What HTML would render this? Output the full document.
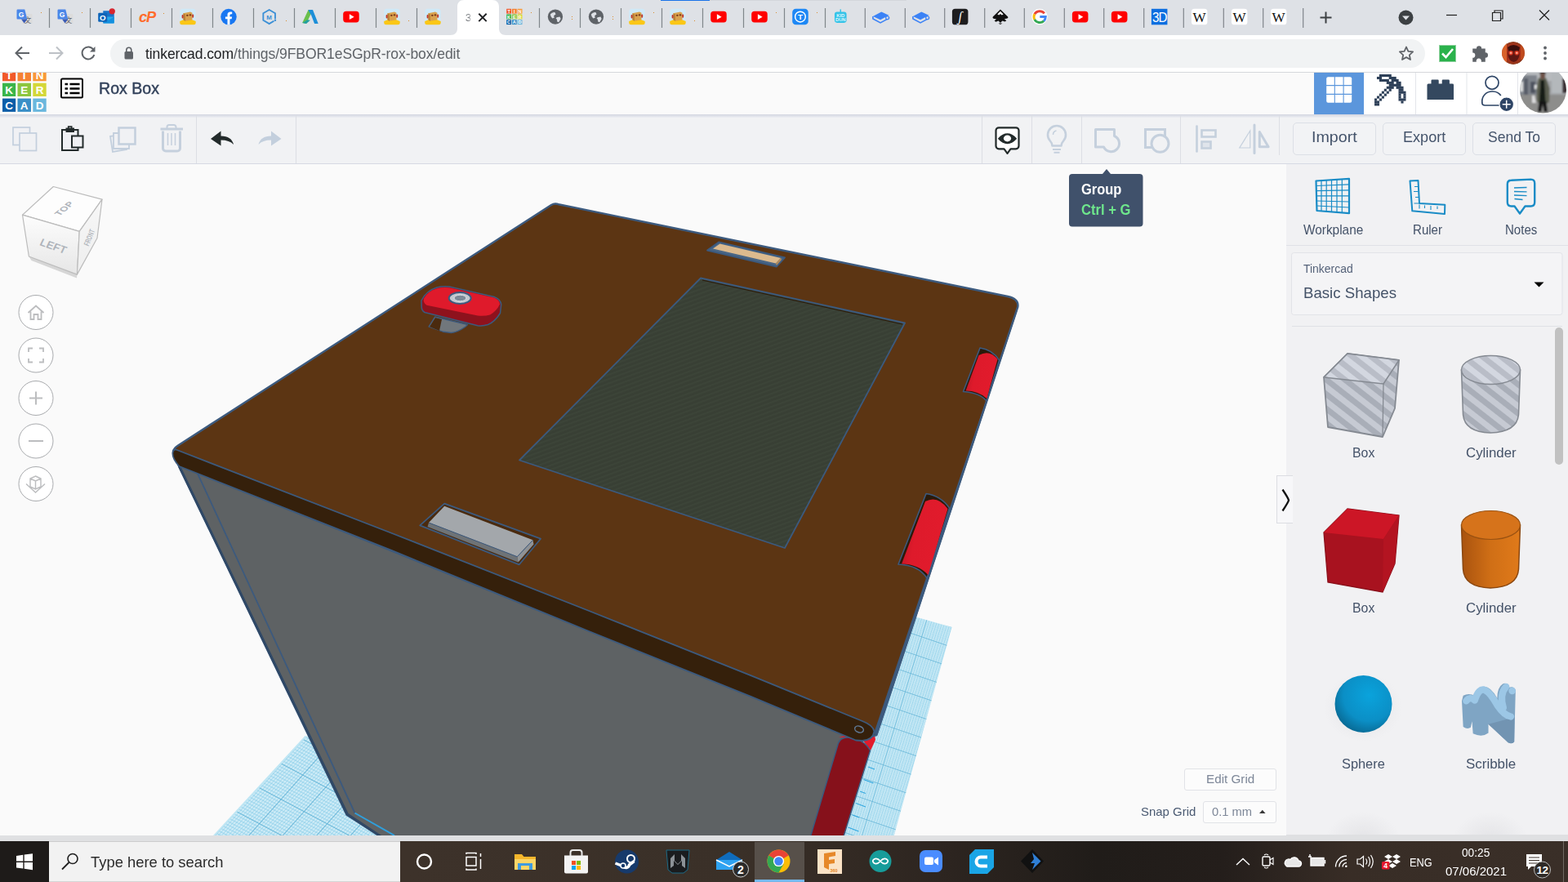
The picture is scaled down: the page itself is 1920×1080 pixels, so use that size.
<!DOCTYPE html>
<html lang="en">
<head>
<meta charset="utf-8">
<title>Rox Box - Tinkercad</title>
<style>
*{box-sizing:border-box;margin:0;padding:0}
html,body{width:1920px;height:1080px;overflow:hidden;background:#fafafa;font-family:"Liberation Sans",sans-serif;}
#root{position:relative;width:1920px;height:1080px;overflow:hidden;background:#fafafa}
.abs{position:absolute}
svg{position:absolute;overflow:visible}
/* chrome */
#tabstrip{left:0;top:0;width:1920px;height:43px;background:#dee1e6}
#addr{left:0;top:43px;width:1920px;height:45px;background:#fff}
#addrline{left:0;top:88px;width:1920px;height:1px;background:#d5d7db}
#omni{left:135px;top:48px;width:1610px;height:35px;border-radius:17.5px;background:#f1f3f4}
#url{left:178px;top:55.200px;transform:scaleX(.955);transform-origin:0 0;font-size:18.4px;line-height:22px;color:#5f6368;white-space:nowrap;letter-spacing:-0.1px}
#url b{font-weight:normal;color:#202124}
.sep{position:absolute;top:10px;width:1px;height:24px;background:#868b92}
/* tinkercad header */
#tkhead{left:0;top:89px;width:1920px;height:51px;background:#fafafa}
#tkshadow{left:0;top:140px;width:1920px;height:4px;background:linear-gradient(#d3d6e0,#eceef2)}
#title{left:121px;top:97px;font-size:19.600px;line-height:24px;color:#33425b;white-space:nowrap;font-weight:normal;-webkit-text-stroke:0.5px #33425b}
#toolbar{left:0;top:141px;width:1920px;height:60px;background:#f1f2f4}
#toolline{left:0;top:200px;width:1920px;height:1px;background:#d6d9e3}
.tdiv{position:absolute;top:141px;width:1px;height:59px;background:#dcdee4}
.btn{position:absolute;top:150px;width:102px;height:40px;border:1px solid #dcdfe6;border-radius:5px;background:#f2f3f5;color:#3b4a5e;font-size:19px;line-height:33px;text-align:center;letter-spacing:0.4px}
/* viewport */
#view{left:0;top:201px;width:1575px;height:822px;background:#fafafa;overflow:hidden}
#panel{left:1575px;top:201px;width:345px;height:821px;background:#f1f1f3;overflow:hidden}
.plabel{position:absolute;font-size:16px;line-height:20px;color:#3d4b63;text-align:center;width:140px;letter-spacing:0.3px;white-space:nowrap}
.slabel{position:absolute;font-size:17px;line-height:20px;color:#3d4b63;text-align:center;width:140px;letter-spacing:0.3px;white-space:nowrap}
#hstrip{left:0;top:1023px;width:1920px;height:7px;background:#dfe0e2}
#taskbar{left:0;top:1030px;width:1920px;height:50px;background:linear-gradient(90deg,#3d322a 0,#3d322a 26%,#3a3028 47%,#2d2520 60%,#201c19 70%,#241e1b 78%,#382d26 86%,#3a2f28 100%)}
#search{left:60px;top:1030px;width:430px;height:50px;background:#f2f2f2;border-top:1px solid #cdcdcd;border-bottom:1px solid #d5d5d5}
#stext{left:110px;top:1043px;font-size:18.5px;line-height:24px;color:#2b2b2b;white-space:nowrap}
.t{position:absolute;white-space:nowrap;transform-origin:0 0;font-family:"Liberation Sans",sans-serif}
</style>
</head>
<body>
<div id="root">
<div class="abs" id="tabstrip"></div>
<div class="abs" id="addr"></div><div class="abs" id="addrline"></div>
<svg width="1920" height="89" viewBox="0 0 1920 89" style="left:0;top:0">
<rect x="809" y="0" width="60" height="1" fill="#1a73e8"/><rect x="869" y="0" width="241" height="1" fill="#d3d6db"/>
<path d="M551.500 43c5.500 0 8.500-3 8.500-8.500V8.500c0-5.500 3-8.500 8.500-8.500h34c5.500 0 8.500 3 8.500 8.500v26c0 5.500 3 8.500 8.500 8.500z" fill="#fff"/>
<text x="573.500" y="25.800" font-size="13.500" fill="#5f6368" text-anchor="middle" opacity=".8">3</text>
<rect x="575.500" y="10" width="4" height="22" fill="#fff" opacity=".75"/>
<path d="M586.300 16.700l9.400 9.400m0-9.400l-9.400 9.400" stroke="#202124" stroke-width="2" fill="none"/>
<rect x="59.9" y="10" width="1.200" height="24" fill="#80868b"/>
<rect x="109.9" y="10" width="1.200" height="24" fill="#80868b"/>
<rect x="159.9" y="10" width="1.200" height="24" fill="#80868b"/>
<rect x="209.9" y="10" width="1.200" height="24" fill="#80868b"/>
<rect x="259.9" y="10" width="1.200" height="24" fill="#80868b"/>
<rect x="309.9" y="10" width="1.200" height="24" fill="#80868b"/>
<rect x="359.9" y="10" width="1.200" height="24" fill="#80868b"/>
<rect x="409.9" y="10" width="1.200" height="24" fill="#80868b"/>
<rect x="459.9" y="10" width="1.200" height="24" fill="#80868b"/>
<rect x="509.9" y="10" width="1.200" height="24" fill="#80868b"/>
<rect x="659.9" y="10" width="1.200" height="24" fill="#80868b"/>
<rect x="709.9" y="10" width="1.200" height="24" fill="#80868b"/>
<rect x="759.9" y="10" width="1.200" height="24" fill="#80868b"/>
<rect x="809.9" y="10" width="1.200" height="24" fill="#80868b"/>
<rect x="859.9" y="10" width="1.200" height="24" fill="#80868b"/>
<rect x="909.9" y="10" width="1.200" height="24" fill="#80868b"/>
<rect x="959.9" y="10" width="1.200" height="24" fill="#80868b"/>
<rect x="1009.9" y="10" width="1.200" height="24" fill="#80868b"/>
<rect x="1058.7" y="10" width="1.200" height="24" fill="#80868b"/>
<rect x="1107.7" y="10" width="1.200" height="24" fill="#80868b"/>
<rect x="1156.1" y="10" width="1.200" height="24" fill="#80868b"/>
<rect x="1205.1" y="10" width="1.200" height="24" fill="#80868b"/>
<rect x="1253.7" y="10" width="1.200" height="24" fill="#80868b"/>
<rect x="1302.7" y="10" width="1.200" height="24" fill="#80868b"/>
<rect x="1351.1" y="10" width="1.200" height="24" fill="#80868b"/>
<rect x="1400.1" y="10" width="1.200" height="24" fill="#80868b"/>
<rect x="1448.7" y="10" width="1.200" height="24" fill="#80868b"/>
<rect x="1497.7" y="10" width="1.200" height="24" fill="#80868b"/>
<rect x="1546.1" y="10" width="1.200" height="24" fill="#80868b"/>
<rect x="1595.1" y="10" width="1.200" height="24" fill="#80868b"/>
<g transform="translate(19.9 10.800) scale(1.220)"><rect x="6" y="5" width="10" height="10" rx="1" fill="#dcdcdc"/><text x="11.5" y="14" font-size="7" fill="#5f6368" text-anchor="middle" font-family="Noto Sans CJK SC,sans-serif">文</text><path d="M0.5 1.5a1 1 0 0 1 1-1h7l2.5 10h-9.5a1 1 0 0 1-1-1z" fill="#4a86e8"/><path d="M5 10.5h6l-3 4z" fill="#3b5bb5"/><text x="5" y="8" font-size="7" font-weight="bold" fill="#fff" text-anchor="middle">G</text></g>
<g transform="translate(69.9 10.800) scale(1.220)"><rect x="6" y="5" width="10" height="10" rx="1" fill="#dcdcdc"/><text x="11.5" y="14" font-size="7" fill="#5f6368" text-anchor="middle" font-family="Noto Sans CJK SC,sans-serif">文</text><path d="M0.5 1.5a1 1 0 0 1 1-1h7l2.5 10h-9.5a1 1 0 0 1-1-1z" fill="#4a86e8"/><path d="M5 10.5h6l-3 4z" fill="#3b5bb5"/><text x="5" y="8" font-size="7" font-weight="bold" fill="#fff" text-anchor="middle">G</text></g>
<g transform="translate(120.2 10.800) scale(1.220)"><rect x="5" y="2" width="11" height="8" fill="#1a73c8"/><path d="M5 8l11 0v5.5a1 1 0 0 1-1 1h-9a1 1 0 0 1-1-1z" fill="#28a8ea"/><path d="M5 8l5.5 3.5L16 8v6.5H5z" fill="#1490df"/><rect x="0" y="4" width="9" height="9" rx="1" fill="#0f64b8"/><text x="4.5" y="11.4" font-size="8" font-weight="bold" fill="#fff" text-anchor="middle">O</text><circle cx="14" cy="2.5" r="3" fill="#d7262f"/></g>
<g transform="translate(170.2 10.800) scale(1.220)"><text x="8" y="13.5" font-size="15" font-weight="bold" font-style="italic" fill="#ff6c2c" text-anchor="middle" letter-spacing="-1">cP</text></g>
<g transform="translate(220.2 10.800) scale(1.220)"><rect x="0" y="0" width="16" height="16" rx="3" fill="#cfe9f7"/><path d="M0 12.5q8-4 16 0v1.5a2 2 0 0 1-2 2h-12a2 2 0 0 1-2-2z" fill="#fbc716"/><path d="M3.5 4.5l7-1.5 2 1v7l-7 1.3-2-1.3z" fill="#d9a24e"/><path d="M3.5 4.5l2 1v6.8l-2-1.3z" fill="#b98035"/><rect x="2" y="6" width="1.6" height="3.5" rx=".8" fill="#c0392b"/><rect x="12.3" y="5.5" width="1.6" height="3.5" rx=".8" fill="#c0392b"/><circle cx="7.5" cy="6.6" r="1" fill="#7a3b1d"/><circle cx="10.5" cy="6.2" r="1" fill="#7a3b1d"/></g>
<g transform="translate(270.2 10.800) scale(1.220)"><circle cx="8" cy="8" r="8" fill="#1877f2"/><path d="M11 10.3l.4-2.3H9.2V6.6c0-.7.3-1.3 1.3-1.3h1V3.2S10.600 3 9.700 3C7.900 3 6.800 4.100 6.800 6v2H4.700v2.300h2.100V16h2.400v-5.700z" fill="#fff"/></g>
<g transform="translate(319.9 10.800) scale(1.220)"><path d="M8 1l6 3.5v7L8 15 2 11.500v-7z" fill="none" stroke="#3a8fd6" stroke-width="1.5"/><text x="8" y="10.600" font-size="6.5" font-weight="bold" fill="#3a8fd6" text-anchor="middle">M</text><circle cx="14" cy="11.500" r="1.600" fill="#dee1e6"/><circle cx="14" cy="11.500" r="1" fill="#3a8fd6"/></g>
<g transform="translate(370.2 10.800) scale(1.220)"><path d="M0 14L6 1h4.500L4 15z" fill="#6abf4b"/><path d="M0 14l4 1 4-3.500-3-0.500z" fill="#22a0a0"/><path d="M6 1h4.500L16 15h-3.800L9 6.500 7.200 3.600z" fill="#1d8fd8"/></g>
<g transform="translate(420.2 10.800) scale(1.220)"><rect x="0" y="2.500" width="16" height="11.200" rx="3" fill="#ff0000"/><path d="M6.300 5.300v5.600L11 8.100z" fill="#fff"/></g>
<g transform="translate(470.2 10.800) scale(1.220)"><rect x="0" y="0" width="16" height="16" rx="3" fill="#cfe9f7"/><path d="M0 12.5q8-4 16 0v1.5a2 2 0 0 1-2 2h-12a2 2 0 0 1-2-2z" fill="#fbc716"/><path d="M3.5 4.5l7-1.5 2 1v7l-7 1.3-2-1.3z" fill="#d9a24e"/><path d="M3.5 4.5l2 1v6.8l-2-1.3z" fill="#b98035"/><rect x="2" y="6" width="1.6" height="3.5" rx=".8" fill="#c0392b"/><rect x="12.3" y="5.5" width="1.6" height="3.5" rx=".8" fill="#c0392b"/><circle cx="7.5" cy="6.6" r="1" fill="#7a3b1d"/><circle cx="10.5" cy="6.2" r="1" fill="#7a3b1d"/></g>
<g transform="translate(520.2 10.800) scale(1.220)"><rect x="0" y="0" width="16" height="16" rx="3" fill="#cfe9f7"/><path d="M0 12.5q8-4 16 0v1.5a2 2 0 0 1-2 2h-12a2 2 0 0 1-2-2z" fill="#fbc716"/><path d="M3.5 4.5l7-1.5 2 1v7l-7 1.3-2-1.3z" fill="#d9a24e"/><path d="M3.5 4.5l2 1v6.8l-2-1.3z" fill="#b98035"/><rect x="2" y="6" width="1.6" height="3.5" rx=".8" fill="#c0392b"/><rect x="12.3" y="5.5" width="1.6" height="3.5" rx=".8" fill="#c0392b"/><circle cx="7.5" cy="6.6" r="1" fill="#7a3b1d"/><circle cx="10.5" cy="6.2" r="1" fill="#7a3b1d"/></g>
<g transform="translate(620.2 10.800) scale(1.220)"><rect x="0.0" y="0.0" width="4.800" height="4.800" fill="#f1592a"/><text x="2.4" y="4.1" font-size="4.600" font-weight="bold" fill="#fff" text-anchor="middle">T</text><rect x="5.5" y="0.0" width="4.800" height="4.800" fill="#f58233"/><text x="7.9" y="4.1" font-size="4.600" font-weight="bold" fill="#fff" text-anchor="middle">I</text><rect x="11.0" y="0.0" width="4.800" height="4.800" fill="#f89939"/><text x="13.4" y="4.1" font-size="4.600" font-weight="bold" fill="#fff" text-anchor="middle">N</text><rect x="0.0" y="5.5" width="4.800" height="4.800" fill="#3ab54a"/><text x="2.4" y="9.6" font-size="4.600" font-weight="bold" fill="#fff" text-anchor="middle">K</text><rect x="5.5" y="5.5" width="4.800" height="4.800" fill="#8cc63f"/><text x="7.9" y="9.6" font-size="4.600" font-weight="bold" fill="#fff" text-anchor="middle">E</text><rect x="11.0" y="5.5" width="4.800" height="4.800" fill="#d7d935"/><text x="13.4" y="9.6" font-size="4.600" font-weight="bold" fill="#fff" text-anchor="middle">R</text><rect x="0.0" y="11.0" width="4.800" height="4.800" fill="#0b5ea8"/><text x="2.4" y="15.1" font-size="4.600" font-weight="bold" fill="#fff" text-anchor="middle">C</text><rect x="5.5" y="11.0" width="4.800" height="4.800" fill="#3a8fc7"/><text x="7.9" y="15.1" font-size="4.600" font-weight="bold" fill="#fff" text-anchor="middle">A</text><rect x="11.0" y="11.0" width="4.800" height="4.800" fill="#6ab7dd"/><text x="13.4" y="15.1" font-size="4.600" font-weight="bold" fill="#fff" text-anchor="middle">D</text></g>
<g transform="translate(670.2 10.800) scale(1.220)"><circle cx="8" cy="8" r="7.500" fill="#5f6368"/><path d="M3 5.500q2-2.500 4.500-2l1 2-2 1.500 .5 2-2 .5-1.500-2zM9.500 8.500l3-.5 1 2-2 3.500-1.500-.5-.5-2.500-1-1z" fill="#dee1e6"/></g>
<g transform="translate(720.2 10.800) scale(1.220)"><circle cx="8" cy="8" r="7.500" fill="#5f6368"/><path d="M3 5.500q2-2.500 4.500-2l1 2-2 1.500 .5 2-2 .5-1.500-2zM9.500 8.500l3-.5 1 2-2 3.500-1.500-.5-.5-2.500-1-1z" fill="#dee1e6"/></g>
<g transform="translate(770.2 10.800) scale(1.220)"><rect x="0" y="0" width="16" height="16" rx="3" fill="#cfe9f7"/><path d="M0 12.5q8-4 16 0v1.5a2 2 0 0 1-2 2h-12a2 2 0 0 1-2-2z" fill="#fbc716"/><path d="M3.5 4.5l7-1.5 2 1v7l-7 1.3-2-1.3z" fill="#d9a24e"/><path d="M3.5 4.5l2 1v6.8l-2-1.3z" fill="#b98035"/><rect x="2" y="6" width="1.6" height="3.5" rx=".8" fill="#c0392b"/><rect x="12.3" y="5.5" width="1.6" height="3.5" rx=".8" fill="#c0392b"/><circle cx="7.5" cy="6.6" r="1" fill="#7a3b1d"/><circle cx="10.5" cy="6.2" r="1" fill="#7a3b1d"/></g>
<g transform="translate(820.2 10.800) scale(1.220)"><rect x="0" y="0" width="16" height="16" rx="3" fill="#cfe9f7"/><path d="M0 12.5q8-4 16 0v1.5a2 2 0 0 1-2 2h-12a2 2 0 0 1-2-2z" fill="#fbc716"/><path d="M3.5 4.5l7-1.5 2 1v7l-7 1.3-2-1.3z" fill="#d9a24e"/><path d="M3.5 4.5l2 1v6.8l-2-1.3z" fill="#b98035"/><rect x="2" y="6" width="1.6" height="3.5" rx=".8" fill="#c0392b"/><rect x="12.3" y="5.5" width="1.6" height="3.5" rx=".8" fill="#c0392b"/><circle cx="7.5" cy="6.6" r="1" fill="#7a3b1d"/><circle cx="10.5" cy="6.2" r="1" fill="#7a3b1d"/></g>
<g transform="translate(870.2 10.800) scale(1.220)"><rect x="0" y="2.500" width="16" height="11.200" rx="3" fill="#ff0000"/><path d="M6.300 5.300v5.600L11 8.100z" fill="#fff"/></g>
<g transform="translate(920.2 10.800) scale(1.220)"><rect x="0" y="2.500" width="16" height="11.200" rx="3" fill="#ff0000"/><path d="M6.300 5.300v5.600L11 8.100z" fill="#fff"/></g>
<g transform="translate(970.2 10.800) scale(1.220)"><rect x="0" y="0" width="16" height="16" rx="3.500" fill="#1e88f5"/><circle cx="8" cy="8" r="5.200" fill="none" stroke="#fff" stroke-width="1.200"/><text x="8" y="11" font-size="8" font-weight="bold" fill="#fff" text-anchor="middle">T</text></g>
<g transform="translate(1019.5 10.800) scale(1.220)"><rect x="2" y="3" width="12" height="11" rx="2.500" fill="#35c3e8"/><rect x="7.400" y="0.500" width="1.200" height="3" fill="#35c3e8"/><text x="8" y="8.300" font-size="4.800" font-weight="bold" fill="#dff6fd" text-anchor="middle">KID</text><text x="8" y="12.800" font-size="4.800" font-weight="bold" fill="#dff6fd" text-anchor="middle">DUN</text></g>
<g transform="translate(1068.9 10.800) scale(1.220)"><path d="M0 7.500L8.500 3 16 6.500 7.500 11z" fill="#3b82f6"/><path d="M0 7.500v2.500L7.500 14 16 9.500v-1" fill="none" stroke="#3b82f6" stroke-width="1.300"/><circle cx="14.500" cy="9" r="1.600" fill="#dee1e6" stroke="#3b82f6" stroke-width="1"/></g>
<g transform="translate(1117.9 10.800) scale(1.220)"><path d="M0 7.500L8.500 3 16 6.500 7.500 11z" fill="#3b82f6"/><path d="M0 7.500v2.500L7.500 14 16 9.500v-1" fill="none" stroke="#3b82f6" stroke-width="1.300"/><circle cx="14.500" cy="9" r="1.600" fill="#dee1e6" stroke="#3b82f6" stroke-width="1"/></g>
<g transform="translate(1165.9 10.800) scale(1.220)"><rect x="0" y="0" width="16" height="16" rx="3" fill="#1d1d1f"/><text x="8" y="12.500" font-size="13" font-style="italic" fill="#fff" text-anchor="middle" font-family="Liberation Serif,serif">ʃ</text></g>
<g transform="translate(1215.2 10.800) scale(1.220)"><path d="M8 0.500L15.500 8q.8 1-.5 1.500l-3 .8 2 1.500-1.500 1-2.500-.8L8 14l-2-2-2.500 1-1.500-1 2-1.500-3-.8Q-.3 9 .5 8z" fill="#111"/><path d="M8 2.500l3 3-1.500.8L8 5 6.500 6.300 5 5.500z" fill="#fff"/><path d="M6 14.500l2 1.200 2-1.200z" fill="#111"/></g>
<g transform="translate(1263.2 10.800) scale(1.220)"><circle cx="8" cy="8" r="8" fill="#fff"/><path d="M12.800 4.600A6 6 0 0 0 3 5.300" fill="none" stroke="#ea4335" stroke-width="2.400"/><path d="M3 5.300a6 6 0 0 0 0 5.400" fill="none" stroke="#fbbc05" stroke-width="2.400"/><path d="M3 10.700a6 6 0 0 0 9.300 1.500" fill="none" stroke="#34a853" stroke-width="2.400"/><path d="M12.300 12.200A6 6 0 0 0 14 8H8.300" fill="none" stroke="#4285f4" stroke-width="2.400"/></g>
<g transform="translate(1312.9 10.800) scale(1.220)"><rect x="0" y="2.500" width="16" height="11.200" rx="3" fill="#ff0000"/><path d="M6.300 5.300v5.600L11 8.100z" fill="#fff"/></g>
<g transform="translate(1360.9 10.800) scale(1.220)"><rect x="0" y="2.500" width="16" height="11.200" rx="3" fill="#ff0000"/><path d="M6.300 5.300v5.600L11 8.100z" fill="#fff"/></g>
<g transform="translate(1409.9 10.800) scale(1.220)"><rect x="0" y="0" width="16" height="16" fill="#0d6fe0"/><text x="8" y="13" font-size="13" fill="#fff" text-anchor="middle" letter-spacing="-1" textLength="14" lengthAdjust="spacingAndGlyphs">3D</text></g>
<g transform="translate(1458.9 10.800) scale(1.220)"><rect x="0" y="0" width="16" height="16" rx="3" fill="#fff"/><text x="8" y="13" font-size="14" fill="#111" text-anchor="middle" font-family="Liberation Serif,serif">W</text></g>
<g transform="translate(1507.9 10.800) scale(1.220)"><rect x="0" y="0" width="16" height="16" rx="3" fill="#fff"/><text x="8" y="13" font-size="14" fill="#111" text-anchor="middle" font-family="Liberation Serif,serif">W</text></g>
<g transform="translate(1555.9 10.800) scale(1.220)"><rect x="0" y="0" width="16" height="16" rx="3" fill="#fff"/><text x="8" y="13" font-size="14" fill="#111" text-anchor="middle" font-family="Liberation Serif,serif">W</text></g>
<rect x="50" y="15" width="1" height="1" fill="#d98b2b"/>
<rect x="100" y="15" width="1" height="1" fill="#d98b2b"/>
<rect x="200" y="16" width="1" height="1" fill="#d98b2b"/>
<rect x="350" y="25" width="1" height="1" fill="#d98b2b"/>
<rect x="500" y="25" width="1" height="1" fill="#d98b2b"/>
<rect x="650" y="15" width="1" height="1" fill="#d98b2b"/>
<rect x="700" y="20" width="1" height="1" fill="#d98b2b"/>
<rect x="700" y="23" width="1" height="1" fill="#d98b2b"/>
<rect x="750" y="20" width="1" height="1" fill="#d98b2b"/>
<rect x="750" y="23" width="1" height="1" fill="#d98b2b"/>
<rect x="800" y="15" width="1" height="1" fill="#d98b2b"/>
<rect x="850" y="25" width="1" height="1" fill="#d98b2b"/>
<rect x="950" y="15" width="1" height="1" fill="#d98b2b"/>
<rect x="1000" y="15" width="1" height="1" fill="#d98b2b"/>
<path d="M1616.500 21.500h14m-7-7v14" stroke="#3c4043" stroke-width="2" fill="none"/>
<circle cx="1721.500" cy="21.500" r="9" fill="#3c4043"/><path d="M1717 19.500h9l-4.500 5z" fill="#dee1e6"/>
<path d="M1771 18.500h13" stroke="#1f1f1f" stroke-width="1.200"/>
<path d="M1827.500 15.500h10v10h-10z" fill="none" stroke="#1f1f1f" stroke-width="1.200"/><path d="M1830 15.500v-2.500h10v10h-2.500" fill="none" stroke="#1f1f1f" stroke-width="1.200"/>
<path d="M1885 12.500l12 12m0-12l-12 12" stroke="#1f1f1f" stroke-width="1.200" fill="none"/>
<path d="M36 65H20m7-7.500L19.500 65l7.500 7.500" stroke="#5f6368" stroke-width="2" fill="none"/>
<path d="M60 65h16m-7-7.500L76.500 65 69 72.500" stroke="#bdc1c6" stroke-width="2" fill="none"/>
<path d="M114.500 61a7.500 7.500 0 1 0 .8 6" stroke="#5f6368" stroke-width="2" fill="none"/><path d="M116.500 57v6.500h-6.500z" fill="#5f6368"/>
</svg>
<div class="abs" id="omni"></div>
<svg width="1920" height="89" viewBox="0 0 1920 89" style="left:0;top:0">
<rect x="152.500" y="63" width="10.500" height="9.500" rx="1.500" fill="#5f6368"/><path d="M154.800 63.500v-2.200a3 3 0 0 1 6 0v2.200" stroke="#5f6368" stroke-width="1.600" fill="none"/>
<path d="M1722 57.500l2.400 5.300 5.700.6-4.300 3.900 1.200 5.700-5-2.900-5 2.900 1.200-5.700-4.300-3.900 5.700-.6z" fill="none" stroke="#5f6368" stroke-width="1.800" stroke-linejoin="round"/>
<rect x="1762.500" y="55.500" width="20" height="20" fill="#2bb24c" stroke="#8fd19e" stroke-width="1"/><path d="M1766 65.500l4.500 4.500 8.500-10" stroke="#fff" stroke-width="2.600" fill="none"/>
<g transform="translate(1812 65.500) scale(1.350) translate(-1811.500 -66.500)"><path d="M1805 62h3.500a2.300 2.300 0 1 1 4.600 0h3.400v3.600a2.400 2.400 0 1 1 0 4.800V74h-3.700a2.300 2.300 0 1 0-4.400 0H1805v-3.600a2.300 2.300 0 1 0 0-4.600z" fill="#5f6368"/></g>
<defs><radialGradient id="av1" cx=".5" cy=".5" r=".5"><stop offset="0" stop-color="#8a2418"/><stop offset=".7" stop-color="#a8301a"/><stop offset="1" stop-color="#8c3a1c"/></radialGradient><radialGradient id="av2" cx=".5" cy=".5" r=".5"><stop offset="0" stop-color="#fff0ea"/><stop offset=".35" stop-color="#ff5a3c"/><stop offset="1" stop-color="#ff2a12" stop-opacity="0"/></radialGradient><clipPath id="avc1"><circle cx="1853" cy="65" r="14"/></clipPath></defs>
<g clip-path="url(#avc1)"><circle cx="1853" cy="65" r="14" fill="url(#av1)"/><rect x="1839" y="51" width="6" height="28" fill="#d8612a"/><rect x="1862" y="53" width="5" height="20" fill="#c8501f" opacity=".8"/><ellipse cx="1853.500" cy="66" rx="7" ry="10" fill="#5e1712"/><path d="M1846 58q7-6 15 0l-1 4h-13z" fill="#3a0f0d"/><circle cx="1850" cy="64.800" r="3.600" fill="url(#av2)"/><circle cx="1857.300" cy="64.800" r="3.600" fill="url(#av2)"/></g>
<circle cx="1892" cy="58.500" r="1.900" fill="#5f6368"/><circle cx="1892" cy="65" r="1.900" fill="#5f6368"/><circle cx="1892" cy="71.500" r="1.900" fill="#5f6368"/>
</svg>
<div class="abs" id="url"><b>tinkercad.com</b>/things/9FBOR1eSGpR-rox-box/edit</div>
<!-- Tinkercad header -->
<div class="abs" id="tkhead"></div>
<div class="abs" id="toolbar"></div>
<div class="abs" id="tkshadow"></div>
<div class="abs" id="toolline"></div>
<svg width="1920" height="52" viewBox="0 89 1920 52" style="left:0;top:89px;overflow:hidden">
  <g font-family="Liberation Sans,sans-serif" font-weight="bold" font-size="13.500" fill="#fff" text-anchor="middle">
    <rect x="3" y="83" width="16.200" height="16.300" fill="#f1592a"/><text x="11.100" y="96.700">T</text>
    <rect x="21.500" y="83" width="16.500" height="16.300" fill="#f58233"/><text x="29.700" y="96.700">I</text>
    <rect x="40.300" y="83" width="16.400" height="16.300" fill="#f89939"/><text x="48.500" y="96.700">N</text>
    <rect x="3" y="101.700" width="16.200" height="16.300" fill="#3ab54a"/><text x="11.100" y="115">K</text>
    <rect x="21.500" y="101.700" width="16.500" height="16.300" fill="#8cc63f"/><text x="29.700" y="115">E</text>
    <rect x="40.300" y="101.700" width="16.400" height="16.300" fill="#d4d738"/><text x="48.500" y="115">R</text>
    <rect x="3" y="120.600" width="16.200" height="16.300" fill="#0b5ea8"/><text x="11.100" y="133.500">C</text>
    <rect x="21.500" y="120.600" width="16.500" height="16.300" fill="#3a8fc7"/><text x="29.700" y="133.500">A</text>
    <rect x="40.300" y="120.600" width="16.400" height="16.300" fill="#6ab7dd"/><text x="48.500" y="133.500">D</text>
  </g>
  <!-- list icon -->
  <rect x="75" y="96.500" width="26" height="23" rx="1.500" fill="#fff" stroke="#000" stroke-width="2"/>
  <path d="M79.500 103h3.500m2.500 0h12M79.500 108.500h3.500m2.500 0h12M79.500 114h3.500m2.500 0h12" stroke="#000" stroke-width="2.400"/>
  <!-- right buttons -->
  <rect x="1609" y="89" width="61" height="51" fill="#5b96dc"/>
  <rect x="1624.200" y="94.200" width="31" height="31.600" rx="2" fill="#fff"/>
  <path d="M1634.300 94v32M1645.100 94v32M1624 104.600h32M1624 115.400h32" stroke="#5b96dc" stroke-width="1.100" fill="none"/>
  <rect x="1670" y="89" width="250" height="51" fill="#fff"/>
  <rect x="1733" y="89" width="1" height="51" fill="#e3e5ea"/><rect x="1795.500" y="89" width="1" height="51" fill="#e3e5ea"/><rect x="1858" y="89" width="1" height="51" fill="#e3e5ea"/>
  <!-- pickaxe -->
  <g fill="#2e4058"><rect x="1688.90" y="91.00" width="14.90" height="3.10"/><rect x="1685.95" y="93.95" width="6.05" height="3.10"/><rect x="1700.70" y="93.95" width="9.00" height="3.10"/><rect x="1688.90" y="96.90" width="11.95" height="3.10"/><rect x="1703.65" y="96.90" width="9.00" height="3.10"/><rect x="1697.75" y="99.85" width="9.00" height="3.10"/><rect x="1709.55" y="99.85" width="6.05" height="3.10"/><rect x="1700.70" y="102.80" width="14.90" height="3.10"/><rect x="1697.75" y="105.75" width="9.00" height="3.10"/><rect x="1709.55" y="105.75" width="9.00" height="3.10"/><rect x="1694.80" y="108.70" width="3.10" height="3.10"/><rect x="1700.70" y="108.70" width="3.10" height="3.10"/><rect x="1712.50" y="108.70" width="6.05" height="3.10"/><rect x="1691.85" y="111.65" width="3.10" height="3.10"/><rect x="1697.75" y="111.65" width="3.10" height="3.10"/><rect x="1712.50" y="111.65" width="9.00" height="3.10"/><rect x="1688.90" y="114.60" width="3.10" height="3.10"/><rect x="1694.80" y="114.60" width="3.10" height="3.10"/><rect x="1712.50" y="114.60" width="3.10" height="3.10"/><rect x="1718.40" y="114.60" width="3.10" height="3.10"/><rect x="1685.95" y="117.55" width="3.10" height="3.10"/><rect x="1691.85" y="117.55" width="3.10" height="3.10"/><rect x="1712.50" y="117.55" width="3.10" height="3.10"/><rect x="1718.40" y="117.55" width="3.10" height="3.10"/><rect x="1683.00" y="120.50" width="3.10" height="3.10"/><rect x="1688.90" y="120.50" width="3.10" height="3.10"/><rect x="1712.50" y="120.50" width="9.00" height="3.10"/><rect x="1683.00" y="123.45" width="6.05" height="3.10"/><rect x="1715.45" y="123.45" width="3.10" height="3.10"/><rect x="1683.00" y="126.40" width="6.05" height="3.10"/></g>
  <!-- lego -->
  <path d="M1747.500 122v-18a1.500 1.500 0 0 1 1.500-1.500h3.500v-3.800a1.200 1.200 0 0 1 1.200-1.200h6.800a1.200 1.200 0 0 1 1.200 1.200v3.800h4v-3.800a1.200 1.200 0 0 1 1.200-1.200h6.800a1.200 1.200 0 0 1 1.200 1.200v3.800h3.600a1.500 1.500 0 0 1 1.500 1.500V122z" fill="#34485f"/>
  <!-- person plus -->
  <circle cx="1827" cy="101.300" r="8" fill="none" stroke="#2e4566" stroke-width="1.700"/>
  <path d="M1814.800 126v-2a12 12 0 0 1 12-12h1.500a12 12 0 0 1 9.500 5" fill="none" stroke="#2e4566" stroke-width="1.700"/>
  <path d="M1814.800 125.500q0 3.500 3.500 3.500h18" fill="none" stroke="#2e4566" stroke-width="1.700"/>
  <circle cx="1844.700" cy="127.800" r="8.800" fill="#2e4566" stroke="#fff" stroke-width="1.200"/>
  <path d="M1839.700 127.800h10m-5-5v10" stroke="#fff" stroke-width="1.500"/>
  <!-- avatar photo -->
  <defs>
    <filter id="avblur" x="-10%" y="-10%" width="120%" height="120%"><feGaussianBlur stdDeviation="1.300"/></filter>
    <clipPath id="avc"><circle cx="1889.500" cy="110" r="28.500"/></clipPath>
    <linearGradient id="avg" x1="0" y1="0" x2="1" y2="0"><stop offset="0" stop-color="#7f8389"/><stop offset=".45" stop-color="#a0a2a6"/><stop offset="1" stop-color="#8d8f92"/></linearGradient>
  </defs>
  <g clip-path="url(#avc)"><g filter="url(#avblur)">
    <rect x="1855" y="75" width="70" height="70" fill="#a3a5a8"/>
    <rect x="1855" y="75" width="70" height="24" fill="#b7babd"/>
    <rect x="1860" y="92" width="22" height="24" fill="#7f848c"/>
    <rect x="1866" y="96" width="5" height="20" fill="#585d68"/>
    <rect x="1874" y="100" width="6" height="14" fill="#4d525e"/>
    <rect x="1900" y="84" width="14" height="30" fill="#b4b8bb"/>
    <rect x="1913" y="96" width="8" height="18" fill="#3a3336"/>
    <rect x="1855" y="116" width="70" height="30" fill="#8d8d8b"/>
    <rect x="1861" y="100" width="4" height="12" fill="#d9dbdc"/>
    <rect x="1879" y="104" width="3" height="5" fill="#e4e5e7"/>
    <path d="M1876 117l3 0 2 9h-5z" fill="#dcdcdd"/>
    <path d="M1883.500 96q5.500-3 10 0l4 12-.5 17-3 1.500h-9l-3-2.500-.5-16z" fill="#5a5d50"/>
    <path d="M1886.500 98l4.500 0 1.500 26h-7.500z" fill="#141a17"/>
    <path d="M1884.500 124l-1.500 13h4.500l1.500-10 1.500 10h4.500l-1.500-13z" fill="#151515"/>
    <ellipse cx="1889" cy="93" rx="3.200" ry="3.800" fill="#6e5146"/>
    <path d="M1885.500 91.500q3.500-4.500 7 0v-3q-3.500-3-7 0z" fill="#2a2220"/>
  </g></g>
</svg>
<!-- toolbar icons -->
<div class="tdiv" style="left:240px"></div><div class="tdiv" style="left:362px"></div>
<div class="tdiv" style="left:1202px"></div><div class="tdiv" style="left:1263px"></div><div class="tdiv" style="left:1324px"></div><div class="tdiv" style="left:1445px"></div><div class="tdiv" style="left:1566px;height:49px"></div>
<svg width="1920" height="60" viewBox="0 141 1920 60" style="left:0;top:141px">
  <!-- copy (disabled) -->
  <g fill="none" stroke="#c3cfdd" stroke-width="1.700">
    <rect x="16" y="156" width="20.500" height="21.500" fill="#f0f1f4"/>
    <rect x="24" y="163" width="20.500" height="21.500" fill="#f0f1f4"/>
  </g>
  <!-- paste -->
  <g fill="none" stroke="#232b2b" stroke-width="2">
    <rect x="76" y="159" width="19.500" height="25" fill="#f0f1f4"/>
    <rect x="80.500" y="156.500" width="10.500" height="5.500" fill="#232b2b" stroke="none"/>
    <rect x="83.700" y="155" width="4" height="4" stroke-width="1.600"/>
    <rect x="88" y="166.500" width="13.500" height="14" fill="#f0f1f4"/>
  </g>
  <!-- duplicate (disabled) -->
  <g fill="#f0f1f4" stroke="#c3cfdd" stroke-width="1.800">
    <path d="M135 167l17-3 3 19-17 3z"/>
    <path d="M139 163h19v19h-19z"/>
    <rect x="145.500" y="156.500" width="20" height="20" stroke-width="2.500"/>
  </g>
  <!-- trash (disabled) -->
  <g fill="none" stroke="#c5d0dd" stroke-width="2.600">
    <path d="M196.500 158h27.500" stroke-width="3"/>
    <path d="M204.500 157v-1.500a2.500 2.500 0 0 1 2.500-2.500h6a2.500 2.500 0 0 1 2.500 2.500v1.500" stroke-width="2"/>
    <path d="M199.500 160.500v21a3.500 3.500 0 0 0 3.500 3.500h14a3.500 3.500 0 0 0 3.500-3.500v-21" stroke-width="3"/>
    <path d="M205.500 163v15M210 163v15M214.500 163v15" stroke-width="1.500"/>
  </g>
  <!-- undo -->
  <path d="M258 170l12.500-9.500v6q13 0 15.500 10.500q-5-5.500-15.500-5.500v7z" fill="#232b2b"/>
  <!-- redo (disabled) -->
  <path d="M344.500 170l-12.500-9.500v6q-13 0-15.500 10.500q5-5.500 15.500-5.500v7z" fill="#c3cfdd"/>
  <!-- eye comment -->
  <path d="M1223 156.300h21a3.500 3.500 0 0 1 3.500 3.500v19a3.500 3.500 0 0 1-3.500 3.500h-6.500l-4 5.500-4-5.500h-6.500a3.500 3.500 0 0 1-3.500-3.500v-19a3.500 3.500 0 0 1 3.500-3.500z" fill="#fff" stroke="#232b2b" stroke-width="2.200" stroke-linejoin="round"/>
  <path d="M1222.800 169.700q10.700-11.500 21.400 0q-10.700 11.500-21.400 0z" fill="#232b2b" stroke="#232b2b" stroke-width="1.500" stroke-linejoin="round"/>
  <ellipse cx="1233.500" cy="169.500" rx="4.600" ry="3.900" fill="#fff"/>
  <!-- bulb -->
  <g fill="none" stroke="#c5d0dd" stroke-width="2.600">
    <path d="M1288.500 178.500q0-3-3-6.500a11 11 0 1 1 17 0q-3 3.500-3 6.500z" stroke-linejoin="round"/>
    <path d="M1289 183h10M1290.500 186.800h7" stroke-width="2"/>
    <path d="M1289.500 165a5 5 0 0 1 4-5" stroke-width="1.500"/>
  </g>
  <!-- group -->
  <path d="M1341.500 158.500h23v8a10 10 0 1 1-13 13.500h-10z" fill="none" stroke="#c5d0dd" stroke-width="3" stroke-linejoin="round"/>
  <!-- ungroup -->
  <g fill="none" stroke="#c5d0dd" stroke-width="3">
    <rect x="1402.500" y="158.500" width="24" height="22"/>
    <circle cx="1420.500" cy="175.800" r="10.500" fill="#f1f2f4"/>
  </g>
  <!-- align -->
  <g fill="none" stroke="#c5d0dd" stroke-width="2.600">
    <path d="M1465.500 154.500v31" stroke-linecap="round"/>
    <rect x="1471.500" y="159.500" width="17" height="8"/>
    <rect x="1471.500" y="173.500" width="11" height="8" fill="#dfe4eb"/>
  </g>
  <!-- mirror -->
  <g fill="none" stroke="#c5d0dd">
    <path d="M1536 153v34.500" stroke-width="3" stroke-linecap="round"/>
    <path d="M1530.800 160v21h-13z" stroke-width="1.200"/>
    <path d="M1542.300 161.500v18.300h10.800z" stroke-width="3" stroke-linejoin="round"/>
  </g>
</svg>
<div class="btn" style="left:1583px"></div>
<div class="btn" style="left:1693px"></div>
<div class="btn" style="left:1803px"></div>
<!-- 3D viewport -->
<div class="abs" id="view">
<svg width="1575" height="822" viewBox="0 201 1575 822" style="left:0;top:0">
  <defs>
    <pattern id="gridL" width="2.820" height="2.980" patternUnits="userSpaceOnUse" patternTransform="matrix(1 0.530 -0.890 1 370.600 948.400)">
      <rect width="2.820" height="2.980" fill="#cdebf6"/>
      <path d="M0 0H2.820M0 0V2.980" stroke="#8fd0ea" stroke-width="1"/>
    </pattern>
    <pattern id="gridL2" width="28.200" height="29.800" patternUnits="userSpaceOnUse" patternTransform="matrix(1 0.530 -0.890 1 370.600 948.400)">
      <path d="M0 0H28.200M0 0V29.800" stroke="#5aaed2" stroke-width="1.300" fill="none"/>
    </pattern>
    <pattern id="gridR" width="3" height="2.240" patternUnits="userSpaceOnUse" patternTransform="matrix(1 0.340 -0.300 1 1128.300 779.200)">
      <rect width="3" height="2.240" fill="#c4e7f4"/>
      <path d="M0 0V2.240" stroke="#93d2eb" stroke-width="1.200"/>
      <path d="M0 0H3" stroke="#a9dcf0" stroke-width=".7"/>
    </pattern>
    <pattern id="gridR2" width="42" height="22.400" patternUnits="userSpaceOnUse" patternTransform="matrix(1 0.340 -0.300 1 1128.300 779.200)">
      <path d="M0 0H42M0 0V22.400" stroke="#62b4d6" stroke-width="1.200" fill="none"/>
    </pattern>
    <pattern id="stripe" width="5" height="5" patternUnits="userSpaceOnUse" patternTransform="rotate(-20)">
      <rect width="5" height="5" fill="#383f34"/>
      <rect width="5" height="2.200" fill="#3c4438"/>
    </pattern>
    <linearGradient id="hinge" x1="0" y1="0" x2="1" y2="0.300">
      <stop offset="0" stop-color="#b01422"/><stop offset=".4" stop-color="#de1a2b"/><stop offset="1" stop-color="#e21b2c"/>
    </linearGradient>
    <linearGradient id="cubeL" x1="0" y1="0" x2="0" y2="1"><stop offset="0" stop-color="#fdfdfd"/><stop offset="1" stop-color="#e6e6e6"/></linearGradient>
    <linearGradient id="cubeR" x1="0" y1="0" x2="0" y2="1"><stop offset="0" stop-color="#f7f7f7"/><stop offset="1" stop-color="#eeeeee"/></linearGradient>
  </defs>
  <!-- workplane grid -->
  <path d="M374.500 901.500L261.500 1024H500L440 900z" fill="url(#gridL)"/>
  <path d="M374.500 901.500L261.500 1024H500L440 900z" fill="url(#gridL2)"/>
  <path d="M374.500 901.500L261.500 1024" stroke="#bfe6f4" stroke-width="2" fill="none"/>
  <path d="M1118 754.500L1165.500 768L1094.500 1024H1020L1060 900z" fill="url(#gridR)"/>
  <path d="M1118 754.500L1165.500 768L1094.500 1024H1020L1060 900z" fill="url(#gridR2)"/>
  <path d="M1063 939l8 3M1057.500 954.500l12 4.500M1053 969l7 2.500M1048 983.500l12 4.500M1044 998l8 3M1038.500 1013l13 5" stroke="#35a9e0" stroke-width="1.300" fill="none"/>
  <!-- gray front face -->
  <path d="M218 569L1042 902L1000 1024H465L424.500 998z" fill="#5e6264" stroke="#3c5a7e" stroke-width="2" stroke-linejoin="round"/>
  <path d="M219.500 571L425.300 997L466 1024" stroke="#2f4866" stroke-width="3" fill="none" stroke-linejoin="round"/>
  <path d="M242 580L434.500 995.500" stroke="#3c5a7e" stroke-width="1.800" fill="none"/>
  <path d="M434.500 995.500L483 1023" stroke="#2f9fdc" stroke-width="2" fill="none"/>
  <!-- red strip bottom -->
  <path d="M1054 903l17 -3 1 6-6 13z" fill="#e21b2c"/>
  <path d="M1027 903L1034 901L1040 903z" fill="#e21b2c"/>
  <path d="M1026.500 910Q1029.500 902 1040 903Q1058 905 1065.500 919L1033 1024H992.500z" fill="#86111b" stroke="#3c5a7e" stroke-width="1.500"/>
  <!-- brown top -->
  <path d="M212 553Q212.500 549 218 545.500L675 251Q679 248.500 684 250.200L1234 363Q1248 366 1246.200 376L1073.300 900L1050 906z" fill="#5c3513" stroke="#3c5a7e" stroke-width="2.400" stroke-linejoin="round"/>
  <path d="M1245.500 381L1074.500 899.500L1069.800 898.500L1244 381z" fill="#3c5a7e"/>
  <!-- dark lip -->
  <path d="M215.500 550.500L480 653L720 747.500L920 827.300L1056 883Q1069 888 1070.500 895.500Q1069 906 1056 907L1048 906.500L920 853.200L720 772.500L480 674.200L219.500 571Q210.500 561 211.500 554Q212.500 550 215.500 550.500z" fill="#35200b" stroke="#3c5a7e" stroke-width="1.800" stroke-linejoin="round"/>
  <ellipse cx="1052" cy="893" rx="5.500" ry="3.800" fill="none" stroke="#5f7894" stroke-width="1.500" transform="rotate(20 1052 893)"/>
  <!-- solar panel -->
  <path d="M858 340.500L1108 395.500L961 671L636 563.500z" fill="url(#stripe)" stroke="#3c5a7e" stroke-width="1.800" stroke-linejoin="round"/>
  <path d="M860 343L1105 397" stroke="#2b1a0a" stroke-width="1" fill="none"/>
  <!-- beige slot -->
  <path d="M866 306.500L880 296.500L961 315.500L951 326.500z" fill="#4a6685" stroke="#3c5a7e" stroke-width="1.800" stroke-linejoin="round"/>
  <path d="M873 304.500L881.500 298.500L956 316L950 322.500z" fill="#dcba8e"/>
  <path d="M950 322.500L956 315.500L957 318L951 325z" fill="#b08a5c"/>
  <!-- gray slot -->
  <path d="M514.200 643.300L544.200 616.700L662 659.700L635.800 691.300z" fill="#4a2a0e" stroke="#3c5a7e" stroke-width="1.800" stroke-linejoin="round"/>
  <path d="M525 640L544.200 619.700L652.500 661.300L633.300 681.700z" fill="#a3a7ab"/>
  <path d="M525 640L633.300 681.700L634.500 688.500L523.500 645z" fill="#6e7377"/>
  <path d="M633.300 681.700L652.500 661.300L653.500 666.500L634.500 688.500z" fill="#8e9296"/>
  <path d="M525 640L633.300 681.700L652.500 661.300" stroke="#3c5a7e" stroke-width="1" fill="none"/>
  <!-- hinges -->
  <path d="M1200 426L1179.500 479.500Q1200 481 1208 491L1223.500 441Q1215 428 1200 426z" fill="#2b1a0a" stroke="#3c5a7e" stroke-width="1.600" stroke-linejoin="round"/>
  <path d="M1198.500 435Q1212 427.500 1221.500 440L1208.300 488Q1198 478.500 1182.500 478.500z" fill="url(#hinge)"/>
  <path d="M1134 604.500L1100 691Q1125 692 1135 708L1162.500 622Q1152 607 1134 604.500z" fill="#2b1a0a" stroke="#3c5a7e" stroke-width="1.600" stroke-linejoin="round"/>
  <path d="M1133 614Q1148 606 1160.500 623L1136.500 704Q1124 690.500 1104 690.500z" fill="url(#hinge)"/>
  <!-- red button -->
  <path d="M525 400L532.500 388L572.500 397.500L570 400Q560 407 552.500 407.500L542.500 406.250z" fill="#71777c" stroke="#3c5a7e" stroke-width="1.300" stroke-linejoin="round"/>
  <path d="M526 400L533 389L541 391L538 405z" fill="#4a2a0e"/>
  <path d="M516 368Q522 356 535 352Q542 350 550 351L605 363.500Q613.500 367 613.700 373L612.500 383.500Q606 394 597.500 397.500Q591 399.500 585 398.700L520 382.500Q516 380 516.200 375z" fill="#8e121d" stroke="#3c5a7e" stroke-width="1.500" stroke-linejoin="round"/>
  <path d="M519 365.500Q524 356.500 535 353.300Q542 351.300 550 352.300L605 364.500Q611.500 367 612 372.500Q608 381 600 385.500Q593 387.500 585 386.500L522.500 373.800Q517.500 370.500 519 365.500z" fill="#df1a2b"/>
  <ellipse cx="563.200" cy="365" rx="13.500" ry="7" fill="#c3c8cf" stroke="#3c5a7e" stroke-width="2"/>
  <ellipse cx="563.500" cy="365" rx="7.500" ry="3.800" fill="#7d8a98" stroke="#dfe4ea" stroke-width="1"/>
  <!-- view cube -->
  <path d="M35.400 314L94.400 336.100L94 340.500L38.500 319z" fill="#d6d6d6"/>
  <path d="M27.500 263.200L65.300 228.500L125 244.200L97.200 283.300z" fill="#fdfdfd" stroke="#bcbcbc" stroke-width="1.200" stroke-linejoin="round"/>
  <path d="M27.500 263.200L97.200 283.300L94.400 336.100L35.400 314z" fill="url(#cubeL)" stroke="#bcbcbc" stroke-width="1.200" stroke-linejoin="round"/>
  <path d="M97.200 283.300L125 244.200L119 291.500L94.400 336.100z" fill="url(#cubeR)" stroke="#bcbcbc" stroke-width="1.200" stroke-linejoin="round"/>
  <text transform="translate(63.500 305.500) rotate(19.500) skewX(-6)" font-size="13" font-weight="bold" fill="#aeb3ba" text-anchor="middle" letter-spacing=".3">LEFT</text>
  <text transform="translate(82 257) rotate(-40) skewX(25) scale(1 .85)" font-size="11.500" font-weight="bold" fill="#aeb3ba" text-anchor="middle" letter-spacing=".3">TOP</text>
  <text transform="translate(112.500 292) rotate(-68) scale(.62 1)" font-size="9.500" font-weight="bold" fill="#b4b8be" text-anchor="middle" letter-spacing=".3">FRONT</text>
  <!-- nav buttons -->
  <g fill="#fff" stroke="#a9abae" stroke-width="1">
    <circle cx="44" cy="382.500" r="21"/><circle cx="44" cy="435" r="21"/><circle cx="44" cy="487.500" r="21"/><circle cx="44" cy="540" r="21"/><circle cx="44" cy="592.500" r="21"/>
  </g>
  <g fill="none" stroke="#bcbdbf" stroke-width="1.800">
    <path d="M34.500 383L44 374.500L53.500 383M37.500 381.500V391H41.500V385H46.500V391H50.500V381.500"/>
    <path d="M35 431V426.500H40M48 426.500H53V431M53 439V443.500H48M40 443.500H35V439"/>
    <path d="M36 487.500H52M44 479.500V495.500" stroke-width="2"/>
    <path d="M35 540H53" stroke-width="2"/>
    <path d="M43.500 583L50 586V596L43.500 599L37 596V586zM37 586L43.500 589L50 586M43.500 589V599M32 592.500L43.500 603L55 592.500" stroke-width="1.400"/>
  </g>
  <!-- tooltip -->
  <path d="M1350 213L1355 207L1360 213z" fill="#40516b"/>
  <rect x="1309" y="213" width="90.500" height="64.500" rx="4" fill="#40516b"/>
</svg>
<div class="abs" style="left:1450px;top:740px;width:113px;height:27px;border:1px solid #e1e3e7;border-radius:3px;background:#fcfcfc"></div>
<div class="abs" style="left:1473px;top:780px;width:90px;height:27px;border:1px solid #e1e3e7;border-radius:3px;background:#fcfcfc"></div>
<svg width="10" height="6" viewBox="0 0 10 6" style="left:1541.800px;top:790px"><path d="M0 5L3.800 0.700L7.600 5z" fill="#3a3a3a"/></svg>
</div>
<!-- right shapes panel -->
<div class="abs" id="panel">
<svg width="345" height="821" viewBox="1575 201 345 821" style="left:0;top:0">
  <defs>
    <pattern id="hole" width="14" height="14" patternUnits="userSpaceOnUse" patternTransform="rotate(38)">
      <rect width="14" height="14" fill="#a9aeb8"/><rect width="14" height="7" fill="#c6cad3"/>
    </pattern>
    <pattern id="holeL" width="14" height="14" patternUnits="userSpaceOnUse" patternTransform="rotate(38)">
      <rect width="14" height="14" fill="#b9bdc7"/><rect width="14" height="7" fill="#d3d7e0"/>
    </pattern>
    <linearGradient id="cylO" x1="0" y1="0" x2="1" y2="0"><stop offset="0" stop-color="#a9530f"/><stop offset=".5" stop-color="#d06f16"/><stop offset="1" stop-color="#e07a1a"/></linearGradient>
    <radialGradient id="sph" cx=".6" cy=".35" r=".75"><stop offset="0" stop-color="#0aa3dc"/><stop offset=".6" stop-color="#0b8fc6"/><stop offset="1" stop-color="#075f86"/></radialGradient>
    <linearGradient id="scr" x1="0" y1="0" x2="0" y2="1"><stop offset="0" stop-color="#9cc3e4"/><stop offset="1" stop-color="#7ea3c4"/></linearGradient>
    <radialGradient id="shadow" cx=".5" cy=".5" r=".5"><stop offset="0" stop-color="#e3e3e6"/><stop offset="1" stop-color="#f1f1f3"/></radialGradient>
  </defs>
  <!-- workplane icon -->
  <g fill="none" stroke="#1a8cc6">
    <path d="M1611.500 221.500L1652 218.800V261.200L1612.500 258z" stroke-width="2.200" stroke-linejoin="round"/>
    <path d="M1618 221V258.500M1624.200 220.500V259M1630.500 220V259.500M1637 219.800V260M1643.300 219.500V260.500" stroke-width="1.200"/>
    <path d="M1611.700 227.500L1652 225.800M1611.900 233.700L1652 232.800M1612 239.800H1652M1612.200 246L1652 247M1612.400 252L1652 254" stroke-width="1.200"/>
  </g>
  <!-- ruler icon -->
  <path d="M1726.500 221.500L1736.500 221L1738 249L1769.300 250.700L1769 261.900L1729.300 258.300z" fill="none" stroke="#1a8cc6" stroke-width="2" stroke-linejoin="round"/>
  <path d="M1732 228.500h4M1731 234.500h5.500M1733 241.500h4M1731.500 249h6M1738 250.500v5M1744.500 251.500v3.500M1752 252v5M1760 252.500v3.500" stroke="#1a8cc6" stroke-width="1.100" fill="none"/>
  <!-- notes icon -->
  <path d="M1850.500 220.800L1874.500 219.600Q1879.200 219.600 1879.200 224.500V247.500Q1879.200 252.500 1874.500 252.500H1867.500L1861 261.500L1854.500 252.500H1850.500Q1845.800 252.500 1845.800 247.500V225.500Q1845.800 220.800 1850.500 220.800z" fill="none" stroke="#1a8cc6" stroke-width="2.400" stroke-linejoin="round"/>
  <path d="M1854 230L1869.500 229.500M1854 234.500L1869.500 234.800M1854 239L1869.500 239.700M1854.500 243.500L1864.500 244.500" stroke="#1a8cc6" stroke-width="1.300"/>
  <!-- dividers -->
  <rect x="1575" y="300" width="345" height="1" fill="#dfe1e6"/>
  <rect x="1582" y="399" width="331" height="1" fill="#dfe1e6"/>
  <!-- dropdown card -->
  <rect x="1581.500" y="309.500" width="331.500" height="76" rx="3" fill="#f4f4f6" stroke="#e2e3e8" stroke-width="1"/>
  <path d="M1878.500 345.500h12l-6 6z" fill="#000"/>
  <!-- scrollbar -->
  <rect x="1904" y="401" width="10" height="168" rx="5" fill="#c1c1c1"/>
  <!-- hole box -->
  <path d="M1621 462L1650 433L1713 441L1708 500L1693 535L1626 523z" fill="url(#hole)" stroke="#858a92" stroke-width="1.800" stroke-linejoin="round"/>
  <path d="M1621 462L1650 433L1713 441L1694 470z" fill="url(#holeL)" stroke="#858a92" stroke-width="1.500" stroke-linejoin="round"/>
  <path d="M1694 470L1693 535" stroke="#858a92" stroke-width="1.300"/>
  <!-- hole cylinder -->
  <path d="M1789.500 453L1791.500 507Q1793 529 1825 530Q1858 529 1859.500 507L1861.500 453z" fill="url(#hole)" stroke="#858a92" stroke-width="1.600"/>
  <ellipse cx="1825.500" cy="453" rx="36" ry="17.500" fill="url(#holeL)" stroke="#858a92" stroke-width="1.500"/>
  <!-- red box -->
  <path d="M1621 652L1650 623L1713 631L1708 690L1693 725L1626 713z" fill="#a8121f" stroke="#8a0f1a" stroke-width="1.300"/>
  <path d="M1621 652L1650 623L1713 631L1694 660z" fill="#cc1626"/>
  <path d="M1694 660L1713 631L1708 690L1693 725z" fill="#b31421"/>
  <!-- orange cylinder -->
  <path d="M1789.500 643L1791.500 697Q1793 719 1825 720Q1858 719 1859.500 697L1861.500 643z" fill="url(#cylO)" stroke="#8a4710" stroke-width="1.500"/>
  <ellipse cx="1825.500" cy="643" rx="36" ry="17.500" fill="#d6731b" stroke="#9a5212" stroke-width="1.200"/>
  <!-- sphere -->
  <ellipse cx="1669" cy="866" rx="48" ry="42" fill="url(#shadow)"/>
  <circle cx="1669.500" cy="862" r="35" fill="url(#sph)"/>
  <!-- scribble -->
  <g transform="translate(1600 800) scale(.16667)">
    <path d="M1140 350L1150 540Q1180 560 1205 545L1215 500L1222 590Q1290 620 1335 585L1335 520L1480 655Q1510 670 1525 650L1535 270Q1520 240 1490 250Q1470 210 1440 225Q1400 250 1400 330Q1350 240 1300 245Q1250 250 1235 310Q1190 290 1150 310z" fill="#7fa5c4"/>
    <path d="M1335 520L1480 655Q1510 670 1525 650L1527 470z" fill="#7294b2"/>
    <path d="M1172 350Q1200 315 1235 345Q1265 250 1310 270Q1350 290 1400 380Q1450 455 1500 465M1445 400Q1415 300 1465 245" fill="none" stroke="#9cc7e6" stroke-width="50" stroke-linecap="round" stroke-linejoin="round"/>
    <circle cx="1510" cy="275" r="26" fill="#9cc7e6"/>
  </g>
  <!-- faint shadows bottom -->
  <ellipse cx="1669" cy="1030" rx="46" ry="36" fill="url(#shadow)"/><ellipse cx="1825" cy="1030" rx="46" ry="36" fill="url(#shadow)"/>
</svg>
</div>
<!-- collapse handle -->
<div class="abs" style="left:1563px;top:582px;width:20px;height:59px;background:#f7f7f9;border:1px solid #dcdde2;border-right:none"></div>
<svg width="20" height="59" viewBox="0 0 20 59" style="left:1563px;top:582px"><path d="M7.500 17.500Q14.500 28 15 30.500Q14.500 33 7.500 43.500" fill="none" stroke="#111" stroke-width="2.300"/></svg>
<!-- bottom strip + taskbar -->
<div class="abs" id="hstrip"></div>
<div class="abs" style="left:1575px;top:1022px;width:345px;height:1px;background:#dfe0e2"></div>
<div class="abs" id="taskbar"></div>
<div class="abs" style="left:0;top:1030px;width:60px;height:50px;background:#1e1b19"></div>
<div class="abs" id="search"></div>
<div class="abs" style="left:924px;top:1031px;width:61px;height:49px;background:#57504a"></div>
<div class="abs" style="left:924px;top:1077px;width:61px;height:3px;background:#76b9ed"></div>
<svg width="1920" height="50" viewBox="0 1030 1920 50" style="left:0;top:1030px">
  <!-- windows logo -->
  <path d="M20 1048L28.300 1046.800V1054.500H20zM29.700 1046.600L40 1045.200V1054.500H29.700zM20 1055.900H28.300V1063.600L20 1062.400zM29.700 1055.900H40V1065.200L29.700 1063.800z" fill="#fff"/>
  <!-- magnifier -->
  <circle cx="89" cy="1051.500" r="6" fill="none" stroke="#1f1f1f" stroke-width="1.600"/>
  <path d="M84.500 1056L76 1064.500" stroke="#1f1f1f" stroke-width="1.800"/>
  <!-- cortana -->
  <circle cx="519.500" cy="1055" r="8.500" fill="none" stroke="#fff" stroke-width="2.400"/>
  <!-- task view -->
  <g fill="none" stroke="#fff" stroke-width="1.500">
    <rect x="571" y="1049.500" width="12" height="10.500"/>
    <path d="M571 1046v-1.500h12v1.500M571 1063.500v1.500h12v-1.500M588.500 1045v4M588.500 1052v12"/>
  </g>
  <!-- explorer -->
  <path d="M630 1046h9l2.500 3h14.500v16h-26z" fill="#f5b62c"/>
  <path d="M630 1052h26v13h-26z" fill="#fcd667"/>
  <path d="M634 1057h18v8h-18z" fill="#3f9be0"/><path d="M638 1060h10v5h-10z" fill="#fcd667"/>
  <!-- store -->
  <path d="M691 1047.500h29v20a2 2 0 0 1-2 2h-25a2 2 0 0 1-2-2z" fill="#f3f3f3"/>
  <path d="M698.500 1048v-4a3 3 0 0 1 3-3h8a3 3 0 0 1 3 3v4" fill="none" stroke="#e8e8e8" stroke-width="2"/>
  <rect x="700" y="1054" width="5" height="5" fill="#f25022"/><rect x="706" y="1054" width="5" height="5" fill="#7fba00"/>
  <rect x="700" y="1060" width="5" height="5" fill="#00a4ef"/><rect x="706" y="1060" width="5" height="5" fill="#ffb900"/>
  <!-- steam -->
  <circle cx="767.500" cy="1055" r="14.500" fill="#173a6b"/>
  <path d="M753.500 1057l10 4a4 4 0 0 0 7-2l6-4.500" stroke="#fff" stroke-width="3.500" fill="none"/>
  <circle cx="772.500" cy="1051.500" r="4.500" fill="none" stroke="#fff" stroke-width="2"/>
  <circle cx="763" cy="1060" r="3" fill="#173a6b" stroke="#fff" stroke-width="1.500"/>
  <!-- predator -->
  <path d="M816 1041h28l-2 24-5 4h-14l-5-4z" fill="#1a1c1e" stroke="#1d6a86" stroke-width="1"/>
  <path d="M821 1063v-12l5-5v8l4 4 4-4v-8l5 5v12l-4-3v-6l-5 5-5-5v6z" fill="#8b9196"/>
  <!-- mail -->
  <path d="M877 1053l16-10 16 10v12h-32z" fill="#0f6cbd"/>
  <path d="M877 1053h32v12h-32z" fill="#2ea3f2"/><path d="M877 1053l16 8 16-8" fill="none" stroke="#fff" stroke-width="1.500"/>
  <circle cx="907" cy="1064.500" r="9.500" fill="#2b2b2b" stroke="#cfcfcf" stroke-width="1"/>
  <text x="907" y="1070" font-size="14" fill="#fff" text-anchor="middle" font-weight="bold">2</text>
  <!-- chrome -->
  <circle cx="953.500" cy="1054.500" r="14" fill="#fbbd05"/>
  <path d="M953.500 1054.500L941.400 1047.500A14 14 0 0 1 965.600 1047.500z" fill="#e94335"/>
  <path d="M953.500 1054.500L941.400 1047.500A14 14 0 0 0 953.500 1068.500L959.500 1058z" fill="#34a853"/>
  <path d="M941.400 1047.500H965.600" stroke="#e94335" stroke-width="0"/>
  <circle cx="953.500" cy="1054.500" r="6.600" fill="#fff"/><circle cx="953.500" cy="1054.500" r="5.200" fill="#4285f4"/>
  <!-- fusion -->
  <rect x="1001" y="1040" width="30" height="30" fill="#fbe3c6"/>
  <path d="M1009 1062v-17l14-2v5l-8 1.500v3.500l7-1v5l-7 1v7z" fill="#e6882a"/>
  <text x="1021" y="1068" font-size="5.500" fill="#e6882a" text-anchor="middle" font-weight="bold">360</text>
  <!-- arduino -->
  <circle cx="1078" cy="1054.500" r="13.500" fill="#179c9a"/>
  <path d="M1078 1054.500q-4-4.500-7.500-2.500t0 5q3.500 2 7.500-2.500q4-4.500 7.500-2.500t0 5q-3.500 2-7.500-2.500z" fill="none" stroke="#fff" stroke-width="1.800"/>
  <!-- zoom -->
  <rect x="1126" y="1041" width="28" height="27" rx="7" fill="#4a8cff"/>
  <rect x="1132" y="1049.500" width="11" height="9.500" rx="2" fill="#fff"/><path d="M1144 1053l5-3.500v10l-5-3.500z" fill="#fff"/>
  <!-- C (cura) -->
  <path d="M1194 1040h23v22l-8 8h-22v-23z" fill="#1aa5e6"/>
  <path d="M1209 1049.500h-8a5.500 5.500 0 0 0 0 11h8" fill="none" stroke="#fff" stroke-width="4"/>
  <!-- blue arrow -->
  <path d="M1264 1040l14 14.500-14 14.500-14-14.500z" fill="#111"/>
  <path d="M1264 1044l10.500 10.500L1264 1065l3-8h-5l4-5z" fill="#2f7fd6"/>
  <!-- tray -->
  <g fill="none" stroke="#fff" stroke-width="1.400">
    <path d="M1514 1059l8-7.500 8 7.500"/>
    <rect x="1546" y="1049" width="9" height="11" rx="1.500"/><path d="M1555 1053l4-2.500v8l-4-2.500M1548 1047q2.500-2 5 0M1548 1062q2.500 2 5 0" stroke-width="1.100"/>
    <path d="M1576 1061h14a3.500 3.500 0 0 0 0-7a5.500 5.500 0 0 0-10-1.500a4.500 4.500 0 0 0-4 8.500z" fill="#e8e8e8"/>
    <rect x="1605" y="1050.500" width="16" height="9.500" fill="#e8e8e8"/><path d="M1622.500 1053v4.500M1604 1046v3M1602 1049h4" />
    <path d="M1644 1061.500a5 5 0 0 1 5-5M1639.800 1061.500a9.200 9.200 0 0 1 9.200-9.200M1635.500 1061.500a13.500 13.500 0 0 1 13.500-13.500" stroke-width="1.300"/><circle cx="1648.300" cy="1060.800" r="1.300" fill="#fff" stroke="none"/>
    <path d="M1662 1052h3.500l4-3.500v13l-4-3.500H1662zM1672.500 1051.500q2.500 3.500 0 7M1675.500 1049q4 6 0 12M1678.500 1047q5.500 8 0 16" stroke-width="1.200"/>
  </g>
  <path d="M1696 1049l5-3 5 3-5 3zM1706 1049l5-3 5 3-5 3zM1696 1055l5-3 5 3-5 3zM1706 1055l5-3 5 3-5 3zM1701 1060l5-3 5 3-5 3z" fill="#fff" transform="translate(-1 0) scale(1)"/>
  <rect x="1692" y="1055" width="9.500" height="9.500" rx="1.500" fill="#e5192d"/>
  <text x="1696.700" y="1063" font-size="8.500" fill="#fff" text-anchor="middle" font-weight="bold">4</text>
  <!-- notification -->
  <path d="M1869 1046h19v15h-13l-4 4v-4h-2z" fill="#fff"/>
  <path d="M1872 1050h13M1872 1053.500h13M1872 1057h13" stroke="#3a2f28" stroke-width="1"/>
  <circle cx="1888.500" cy="1065" r="10" fill="#2f2a26" stroke="#b9b9b9" stroke-width="1"/>
  <text x="1888.500" y="1070" font-size="13.500" fill="#fff" text-anchor="middle" font-weight="bold" letter-spacing="-.5">12</text>
  <rect x="1914" y="1030" width="1" height="50" fill="#6f6862"/>
</svg>
<!-- text overlay -->
<div class="t" style="left:121.0px;top:99.2px;font-size:19.3px;line-height:19.3px;color:#33425b;transform:scaleX(1.015);-webkit-text-stroke:.45px #33425b">Rox Box</div>
<div class="t" style="left:1606.0px;top:157.9px;font-size:19px;line-height:19px;color:#44536a;transform:scaleX(1.034)">Import</div>
<div class="t" style="left:1717.7px;top:157.9px;font-size:19px;line-height:19px;color:#44536a;transform:scaleX(0.952)">Export</div>
<div class="t" style="left:1821.7px;top:157.9px;font-size:19px;line-height:19px;color:#44536a;transform:scaleX(0.922)">Send To</div>
<div class="t" style="left:1324.0px;top:224.2px;font-size:17.5px;line-height:17.5px;color:#ffffff;transform:scaleX(0.939);font-weight:bold">Group</div>
<div class="t" style="left:1324.0px;top:249.2px;font-size:17.5px;line-height:17.5px;color:#6ee78c;transform:scaleX(0.947);font-weight:bold">Ctrl + G</div>
<div class="t" style="left:1596.0px;top:272.9px;font-size:16.3px;line-height:16.3px;color:#445268;transform:scaleX(0.945)">Workplane</div>
<div class="t" style="left:1730.0px;top:272.9px;font-size:16.3px;line-height:16.3px;color:#445268;transform:scaleX(0.925)">Ruler</div>
<div class="t" style="left:1843.3px;top:272.9px;font-size:16.3px;line-height:16.3px;color:#445268;transform:scaleX(0.924)">Notes</div>
<div class="t" style="left:1596.0px;top:322.4px;font-size:14px;line-height:14px;color:#56637a;transform:scaleX(0.996)">Tinkercad</div>
<div class="t" style="left:1596.0px;top:348.9px;font-size:19px;line-height:19px;color:#445268;transform:scaleX(0.981)">Basic Shapes</div>
<div class="t" style="left:1656.0px;top:546.2px;font-size:17.3px;line-height:17.3px;color:#445268;transform:scaleX(0.917)">Box</div>
<div class="t" style="left:1795.0px;top:546.2px;font-size:17.3px;line-height:17.3px;color:#445268;transform:scaleX(0.973)">Cylinder</div>
<div class="t" style="left:1656.0px;top:736.2px;font-size:17.3px;line-height:17.3px;color:#445268;transform:scaleX(0.917)">Box</div>
<div class="t" style="left:1795.0px;top:736.2px;font-size:17.3px;line-height:17.3px;color:#445268;transform:scaleX(0.973)">Cylinder</div>
<div class="t" style="left:1643.0px;top:926.7px;font-size:17.3px;line-height:17.3px;color:#445268;transform:scaleX(0.947)">Sphere</div>
<div class="t" style="left:1795.0px;top:926.7px;font-size:17.3px;line-height:17.3px;color:#445268;transform:scaleX(0.980)">Scribble</div>
<div class="t" style="left:1476.7px;top:947.0px;font-size:14.5px;line-height:14.5px;color:#7d8798;transform:scaleX(1.051)">Edit Grid</div>
<div class="t" style="left:1396.7px;top:987.0px;font-size:14.5px;line-height:14.5px;color:#4a5a72;transform:scaleX(1.031)">Snap Grid</div>
<div class="t" style="left:1484.3px;top:987.0px;font-size:14.5px;line-height:14.5px;color:#7d8798;transform:scaleX(1.014)">0.1 mm</div>
<div class="t" style="left:110.7px;top:1046.6px;font-size:18.5px;line-height:18.5px;color:#2b2b2b;transform:scaleX(0.994)">Type here to search</div>
<div class="t" style="left:1725.7px;top:1047.9px;font-size:15.5px;line-height:15.5px;color:#ffffff;transform:scaleX(0.822)">ENG</div>
<div class="t" style="left:1790.0px;top:1035.9px;font-size:15.5px;line-height:15.5px;color:#ffffff;transform:scaleX(0.884)">00:25</div>
<div class="t" style="left:1770.0px;top:1059.2px;font-size:15.5px;line-height:15.5px;color:#ffffff;transform:scaleX(0.967)">07/06/2021</div>
</div>
</body>
</html>
